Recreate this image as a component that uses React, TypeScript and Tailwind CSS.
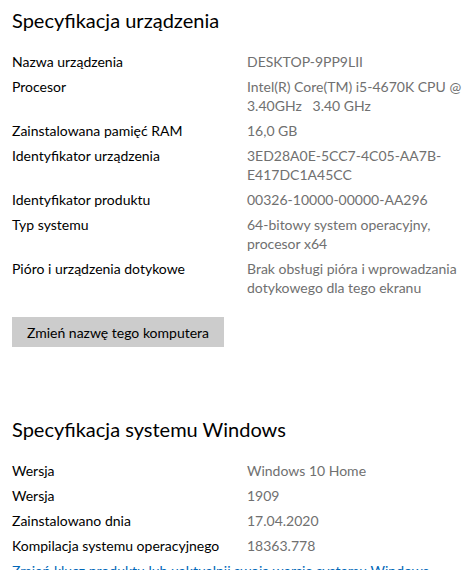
const DEVICE: [string, string][] = [
  ['Nazwa urządzenia', 'DESKTOP-9PP9LII'],
  ['Procesor', 'Intel(R) Core(TM) i5-4670K CPU @ 3.40GHz   3.40 GHz'],
  ['Zainstalowana pamięć RAM', '16,0 GB'],
  ['Identyfikator urządzenia', '3ED28A0E-5CC7-4C05-AA7B-E417DC1A45CC'],
  ['Identyfikator produktu', '00326-10000-00000-AA296'],
  ['Typ systemu', '64-bitowy system operacyjny, procesor x64'],
  ['Pióro i urządzenia dotykowe', 'Brak obsługi pióra i wprowadzania dotykowego dla tego ekranu'],
];

const WINDOWS: [string, string][] = [
  ['Wersja', 'Windows 10 Home'],
  ['Wersja', '1909'],
  ['Zainstalowano dnia', '17.04.2020'],
  ['Kompilacja systemu operacyjnego', '18363.778'],
];

function SpecTable({ rows }: { rows: [string, string][] }) {
  return (
    <div className="grid grid-cols-[235px_1fr] gap-y-[6px] text-[14px] leading-[19px]">
      {rows.map(([label, value], i) => (
        <div key={i} className="contents">
          <div className="text-black">{label}</div>
          <div className="text-[#707070] break-words whitespace-pre-wrap">{value}</div>
        </div>
      ))}
    </div>
  );
}

export default function App() {
  return (
    <div
      className="w-[472px] h-[570px] overflow-hidden bg-white pl-3 pr-1 pt-[6px]"
      style={{ fontFamily: 'Lato, "Open Sans", sans-serif' }}
    >
      <h1 className="text-[20px] leading-[28px] text-black mb-[18px]">Specyfikacja urządzenia</h1>
      <SpecTable rows={DEVICE} />
      <button className="mt-5 w-[212px] h-[30px] bg-[#cccccc] text-[14px] text-black">
        Zmień nazwę tego komputera
      </button>
      <h1 className="mt-[68px] text-[20px] leading-[28px] text-black mb-[18px]">Specyfikacja systemu Windows</h1>
      <SpecTable rows={WINDOWS} />
      <div className="mt-[6px] text-[14px] leading-[19px] text-[#0067b8] whitespace-nowrap">
        Zmień klucz produktu lub uaktualnij swoją wersję systemu Windows
      </div>
    </div>
  );
}
